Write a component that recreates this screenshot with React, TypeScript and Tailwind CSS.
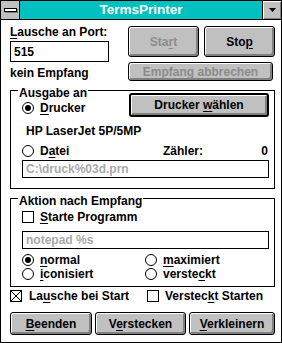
import React from 'react';

// Windows 3.1 style dialog: TermsPrinter

function U({ children }: { children: React.ReactNode }) {
  return <u className="underline decoration-1 underline-offset-[2px]">{children}</u>;
}

interface BtnProps {
  children: React.ReactNode;
  className?: string;
  disabled?: boolean;
  isDefault?: boolean;
}

function Btn({ children, className = '', disabled = false, isDefault = false }: BtnProps) {
  return (
    <div
      className={`flex items-center justify-center bg-[#c0c0c0] border-black rounded-[3px] shadow-[inset_1px_1px_0_#fff,inset_-2px_-2px_0_#808080] ${
        isDefault ? 'border-2' : 'border'
      } ${disabled ? 'text-[#8c8c8c]' : 'text-black'} ${className}`}
    >
      <span>{children}</span>
    </div>
  );
}

function Radio({ checked = false }: { checked?: boolean }) {
  return (
    <span className="w-[12px] h-[12px] rounded-full border border-black bg-white flex items-center justify-center shrink-0">
      {checked && <span className="w-[6px] h-[6px] rounded-full bg-black" />}
    </span>
  );
}

function Check({ checked = false }: { checked?: boolean }) {
  return (
    <span className="w-[12px] h-[12px] border border-black bg-white shrink-0 relative">
      {checked && (
        <svg className="absolute inset-0" width="10" height="10" viewBox="0 0 10 10">
          <path d="M0 0L10 10M10 0L0 10" stroke="#000" strokeWidth="1" />
        </svg>
      )}
    </span>
  );
}

export default function App() {
  return (
    <div className="w-[282px] h-[343px] border border-black bg-white flex flex-col font-['Liberation_Sans',Arial,sans-serif] font-bold text-[12px] leading-[14px] text-black select-none">
      {/* Title bar */}
      <div className="h-[19px] flex border-b border-black shrink-0">
        <div className="w-[19px] bg-[#c0c0c0] border-r border-black flex items-center justify-center">
          <div className="w-[13px] h-[4px] bg-white border border-black shadow-[1px_1px_0_#808080]" />
        </div>
        <div className="flex-1 bg-[#00c0c0] text-white text-[13.5px] leading-[18px] text-center">
          TermsPrinter
        </div>
        <div className="w-[19px] border-l border-black bg-[#c0c0c0] shadow-[inset_1px_1px_0_#fff,inset_-1px_-1px_0_#808080] flex items-center justify-center">
          <svg width="7" height="4" viewBox="0 0 7 4">
            <path d="M0 0h7L3.5 4z" fill="#000" />
          </svg>
        </div>
      </div>

      <div className="flex-1 pl-[9px] pr-[6px] flex flex-col">
        {/* Port + start/stop */}
        <div className="flex items-start">
          <div className="w-[100px] pt-[5px] flex flex-col">
            <div>
              <U>L</U>ausche an Port:
            </div>
            <div className="mt-[2px] h-[21px] border border-black pl-[3px] flex items-center">515</div>
            <div className="mt-[4px]">kein Empfang</div>
          </div>
          <div className="ml-[19px] pt-[6px] flex flex-col">
            <div className="flex gap-[5px]">
              <Btn disabled className="w-[71px] h-[31px]">
                Sta<U>r</U>t
              </Btn>
              <Btn className="w-[71px] h-[31px]">
                Sto<U>p</U>
              </Btn>
            </div>
            <Btn disabled className="mt-[5px] w-[145px] h-[19px]">
              Emp<U>f</U>ang abbrechen
            </Btn>
          </div>
        </div>

        {/* Ausgabe an */}
        <div className="mt-[9px] h-[99px] relative border border-black flex flex-col">
          <span className="absolute left-[7px] top-[-5px] bg-white px-[1px]">Ausgabe an</span>
          <div className="flex items-start">
            <div className="mt-[10px] ml-[11px] flex items-center gap-[6px]">
              <Radio checked />
              <span>
                <U>D</U>rucker
              </span>
            </div>
            <Btn isDefault className="ml-auto mr-[5px] mt-[2px] w-[140px] h-[24px]">
              Drucker <U>w</U>ählen
            </Btn>
          </div>
          <div className="mt-[7px] ml-[15px]">HP LaserJet 5P/5MP</div>
          <div className="mt-[6px] ml-[11px] flex items-center">
            <div className="w-[141px] flex items-center gap-[6px]">
              <Radio />
              <span>
                D<U>a</U>tei
              </span>
            </div>
            <span className="flex-1">Zähler:</span>
            <span className="mr-[6px]">0</span>
          </div>
          <div className="mt-[2px] ml-[11px] w-[247px] h-[18px] border border-black pl-[3px] flex items-center text-[#a8a8a8]">
            C:\druck%03d.prn
          </div>
        </div>

        {/* Aktion nach Empfang */}
        <div className="mt-[9px] h-[89px] relative border border-black flex flex-col">
          <span className="absolute left-[7px] top-[-5px] bg-white px-[1px]">Aktion nach Empfang</span>
          <div className="mt-[11px] ml-[11px] flex items-center gap-[6px]">
            <Check />
            <span>
              <U>S</U>tarte Programm
            </span>
          </div>
          <div className="mt-[7px] ml-[11px] w-[247px] h-[18px] border border-black pl-[3px] flex items-center text-[#a8a8a8]">
            notepad %s
          </div>
          <div className="mt-[4px] ml-[11px] flex items-center">
            <div className="w-[123px] flex items-center gap-[6px]">
              <Radio checked />
              <span>
                <U>n</U>ormal
              </span>
            </div>
            <div className="flex items-center gap-[6px]">
              <Radio />
              <span>
                <U>m</U>aximiert
              </span>
            </div>
          </div>
          <div className="ml-[11px] flex items-center">
            <div className="w-[123px] flex items-center gap-[6px]">
              <Radio />
              <span>
                <U>i</U>conisiert
              </span>
            </div>
            <div className="flex items-center gap-[6px]">
              <Radio />
              <span>
                verste<U>c</U>kt
              </span>
            </div>
          </div>
        </div>

        {/* Startup options */}
        <div className="mt-[2px] flex items-center">
          <div className="w-[137px] flex items-center gap-[7px]">
            <Check checked />
            <span>
              La<U>u</U>sche bei Start
            </span>
          </div>
          <div className="flex items-center gap-[6px]">
            <Check />
            <span>
              Verstec<U>k</U>t Starten
            </span>
          </div>
        </div>

        {/* Bottom buttons */}
        <div className="mt-[9px] flex gap-[3px]">
          <Btn className="w-[82px] h-[23px]">
            <U>B</U>eenden
          </Btn>
          <Btn className="w-[91px] h-[23px]">
            V<U>e</U>rstecken
          </Btn>
          <Btn className="w-[86px] h-[23px]">
            <U>V</U>erkleinern
          </Btn>
        </div>
      </div>
    </div>
  );
}
